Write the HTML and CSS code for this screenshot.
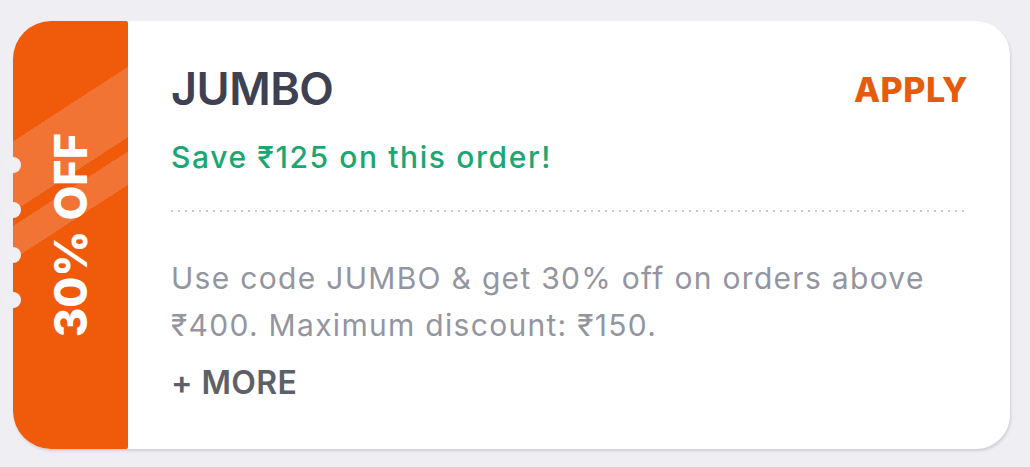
FILE: index.html
```html
<!DOCTYPE html>
<html>
<head>
    <title>Coupon</title>
    <link rel="stylesheet" href="styles.css">
</head>
<body>
    <div class="page">
        <div class="coupon">
            <div class="strip">
                <span class="strip-label">30% OFF</span>
            </div>
            <span class="notch n1"></span>
            <span class="notch n2"></span>
            <span class="notch n3"></span>
            <span class="notch n4"></span>

            <div class="details">
                <div class="head">
                    <h2 class="code">JUMBO</h2>
                    <a class="apply">APPLY</a>
                </div>
                <p class="save">Save ₹125 on this order!</p>
                <div class="dots"></div>
                <p class="desc">Use code JUMBO &amp; get 30% off on orders above<br>₹400. Maximum discount: ₹150.</p>
                <a class="more">+ MORE</a>
            </div>
        </div>
    </div>
</body>
</html>
```

FILE: styles.css
```css
body {
    margin: 0;
    background-color: #eeeef3;
    font-family: Inter, "DejaVu Sans", sans-serif;
}
.page {
    padding: 21px 20px 18px 13px;
}
.coupon {
    position: relative;
    display: flex;
    height: 428px;
    background-color: #fff;
    border-radius: 38px 34px 34px 38px;
    box-shadow: 1px 2px 3px rgba(0, 0, 0, 0.13);
}
.strip {
    width: 115px;
    flex-shrink: 0;
    display: flex;
    align-items: center;
    justify-content: center;
    border-radius: 38px 2px 2px 38px;
    background: linear-gradient(147deg, #ef5a0b 0 101px, #f27434 101px 160px, #ef5a0b 160px 172px, #f27434 172px 200px, #ef5a0b 200px);
}
.strip-label {
    writing-mode: vertical-rl;
    transform: rotate(180deg);
    color: #fff;
    font-size: 45px;
    font-weight: 800;
    line-height: 1;
    white-space: nowrap;
}
.notch {
    position: absolute;
    left: -8px;
    width: 16px;
    height: 16px;
    border-radius: 50%;
    background-color: #f0f0f4;
}
.n1 { top: 136px; }
.n2 { top: 181px; }
.n3 { top: 226px; }
.n4 { top: 271px; }
.details {
    flex: 1;
    padding: 45px 42px 0 43px;
}
.head {
    display: flex;
    justify-content: space-between;
    align-items: flex-start;
}
.code {
    margin: 0;
    font-size: 45px;
    font-weight: 600;
    line-height: 1;
    letter-spacing: -0.5px;
    color: #3d4152;
}
.apply {
    margin-top: 7px;
    font-size: 34px;
    font-weight: 800;
    line-height: 1;
    letter-spacing: 0.5px;
    color: #e65c0d;
}
.save {
    margin: 31px 0 0;
    font-size: 30px;
    font-weight: 500;
    line-height: 1;
    letter-spacing: 1.6px;
    color: #1ba672;
}
.dots {
    margin-top: 38px;
    height: 2px;
    background: linear-gradient(to right, #c6c8cd 2px, transparent 2px) repeat-x;
    background-size: 7px 2px;
}
.desc {
    margin: 43px 0 0;
    font-size: 30px;
    line-height: 47px;
    letter-spacing: 1.3px;
    color: #93959f;
}
.more {
    display: block;
    margin-top: 18px;
    font-size: 32px;
    font-weight: 600;
    line-height: 1;
    letter-spacing: 0.4px;
    color: #5e6068;
}
```
